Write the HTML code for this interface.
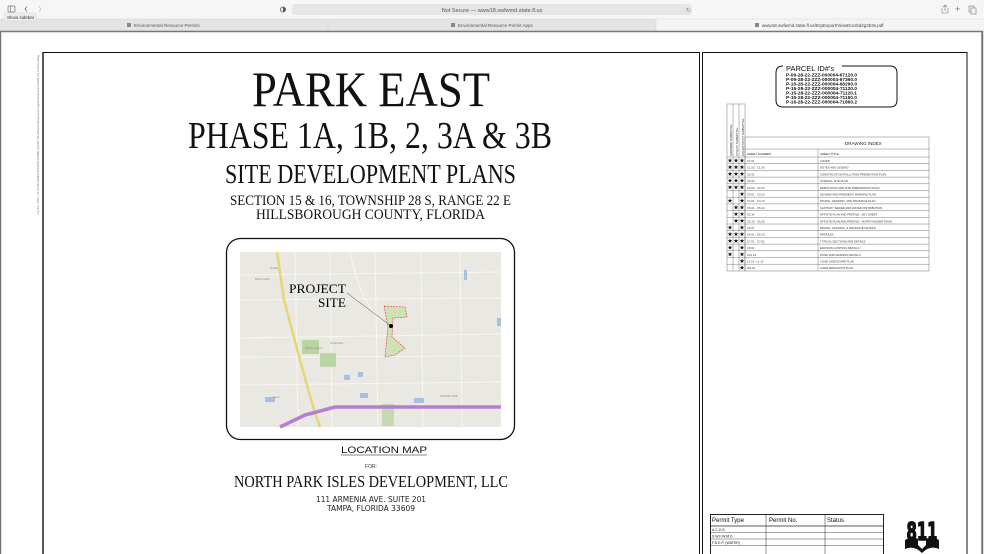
<!DOCTYPE html>
<html><head><meta charset="utf-8"><style>
html,body{margin:0;padding:0;width:984px;height:554px;overflow:hidden;background:#fff}
svg{display:block}
</style></head><body>
<svg width="984" height="554" viewBox="0 0 984 554" xmlns="http://www.w3.org/2000/svg" xmlns:xlink="http://www.w3.org/1999/xlink" font-family="Liberation Sans, sans-serif">
<defs><path id="s" d="M0,-2.4 L0.56,-0.77 L2.28,-0.74 L0.9,0.29 L1.41,1.94 L0,0.95 L-1.41,1.94 L-0.9,0.29 L-2.28,-0.74 L-0.56,-0.77Z" fill="#111"/></defs>
<!-- browser chrome -->
<rect x="0" y="0" width="984" height="19" fill="#f6f6f6"/>
<rect x="0" y="19" width="984" height="12" fill="#e4e4e4"/>
<rect x="656" y="19" width="328" height="12" fill="#f4f4f4"/>
<line x1="0" y1="19" x2="984" y2="19" stroke="#d8d8d8" stroke-width="0.5"/>
<line x1="328" y1="20" x2="328" y2="30" stroke="#ccc" stroke-width="0.5"/>
<line x1="656" y1="20" x2="656" y2="30" stroke="#ccc" stroke-width="0.5"/>
<rect x="292" y="4" width="400" height="11" rx="3" fill="#e6e6e6"/>
<text x="492" y="12" font-size="5.5" fill="#555" text-anchor="middle">Not Secure — www18.swfwmd.state.fl.us</text>
<text x="686" y="12" font-size="6" fill="#888">↻</text>
<rect x="8" y="6" width="7" height="6" rx="1" fill="none" stroke="#777" stroke-width="0.7"/>
<line x1="10.5" y1="6" x2="10.5" y2="12" stroke="#777" stroke-width="0.7"/>
<path d="M27 6.5 L25 9 L27 11.5" fill="none" stroke="#666" stroke-width="0.7"/>
<path d="M39 6.5 L41 9 L39 11.5" fill="none" stroke="#bbb" stroke-width="0.7"/>
<rect x="4" y="13" width="32" height="8" rx="1" fill="#eee" stroke="#ccc" stroke-width="0.4"/>
<text x="7" y="19" font-size="4.5" fill="#333">Show sidebar</text>
<circle cx="283" cy="9.5" r="2.5" fill="none" stroke="#555" stroke-width="0.8"/>
<path d="M283 7 A2.5 2.5 0 0 1 283 12 Z" fill="#555"/>
<path d="M943 7 L945 5 L947 7 M945 5 L945 11 M942 8 L942 13 L948 13 L948 8" fill="none" stroke="#777" stroke-width="0.6"/>
<text x="955" y="12" font-size="9" fill="#777">+</text>
<rect x="969" y="6" width="5" height="6" fill="none" stroke="#777" stroke-width="0.6"/>
<rect x="971" y="8" width="5" height="6" fill="#f6f6f6" stroke="#777" stroke-width="0.6"/>
<rect x="127" y="23" width="4" height="4" fill="#888"/>
<text x="134" y="27" font-size="4.5" fill="#555">Environmental Resource Permits</text>
<rect x="451" y="23" width="4" height="4" fill="#888"/>
<text x="458" y="27" font-size="4.5" fill="#555">Environmental Resource Permit Apps</text>
<rect x="755" y="23" width="4" height="4" fill="#888"/>
<text x="762" y="27" font-size="4.5" fill="#444">www18.swfwmd.state.fl.us/ErpExport/ViewDoc/5d2g3b3s.pdf</text>
<!-- page frame -->
<rect x="0.5" y="31.5" width="982" height="530" fill="#fff" stroke="#777" stroke-width="1.5"/>
<!-- drawing borders -->
<line x1="43" y1="52" x2="43" y2="554" stroke="#555" stroke-width="2"/>
<line x1="43" y1="52.5" x2="699" y2="52.5" stroke="#111" stroke-width="1"/>
<line x1="699.5" y1="52" x2="699.5" y2="554" stroke="#111" stroke-width="1"/>
<rect x="702.5" y="52.5" width="264.5" height="510" fill="none" stroke="#111" stroke-width="1"/>
<text transform="translate(39,215) rotate(-90)" font-size="2.6" fill="#777" textLength="160" lengthAdjust="spacingAndGlyphs">Jul 19, 2017 G:\CAD\2016\160260 PARK EAST PH\Plans\Engineering\Construction\C0.01 Cover.dwg</text>
<!-- titles -->
<g font-family="Liberation Serif, serif" fill="#111" text-anchor="start">
<text x="252" y="106" font-size="50" textLength="238" lengthAdjust="spacingAndGlyphs">PARK EAST</text>
<text x="188" y="148" font-size="38" textLength="364" lengthAdjust="spacingAndGlyphs">PHASE 1A, 1B, 2, 3A &amp; 3B</text>
<text x="225" y="183" font-size="27" textLength="291" lengthAdjust="spacingAndGlyphs">SITE DEVELOPMENT PLANS</text>
<text x="230" y="205" font-size="15" textLength="281" lengthAdjust="spacingAndGlyphs">SECTION 15 &amp; 16, TOWNSHIP 28 S, RANGE 22 E</text>
<text x="256" y="219" font-size="15" textLength="229" lengthAdjust="spacingAndGlyphs">HILLSBOROUGH COUNTY, FLORIDA</text>
<text x="234" y="487" font-size="17" textLength="274" lengthAdjust="spacingAndGlyphs">NORTH PARK ISLES DEVELOPMENT, LLC</text>
</g>
<text x="341" y="453" font-size="9" fill="#111" textLength="86" lengthAdjust="spacingAndGlyphs">LOCATION MAP</text>
<line x1="341" y1="455" x2="427" y2="455" stroke="#111" stroke-width="0.6"/>
<text x="371" y="468" font-size="5" fill="#333" text-anchor="middle">FOR:</text>
<text x="316" y="502" font-size="8" fill="#222" textLength="110" lengthAdjust="spacingAndGlyphs" font-family="DejaVu Sans, sans-serif">111 ARMENIA AVE. SUITE 201</text>
<text x="327" y="511" font-size="8" fill="#222" textLength="88" lengthAdjust="spacingAndGlyphs" font-family="DejaVu Sans, sans-serif">TAMPA, FLORIDA 33609</text>
<!-- map box -->
<rect x="226.5" y="238.5" width="288" height="201" rx="14" fill="#fff" stroke="#111" stroke-width="1.3"/>
<rect x="240" y="252" width="261" height="175" fill="#e9e8e2"/>
<g stroke="#f7f6f2" stroke-width="1" fill="none">
<path d="M240 275 L501 272"/><path d="M240 300 L501 298"/><path d="M240 338 L501 334"/>
<path d="M240 385 L501 382"/><path d="M375 252 L378 427"/><path d="M421 252 L423 427"/>
<path d="M460 252 L462 427"/><path d="M330 252 L332 427"/><path d="M295 252 L298 427"/>
<path d="M240 357 L501 356"/><path d="M350 252 Q360 300 380 320"/>
</g>
<path d="M277 252 L284 300 L300 360 L314 410 L320 427" stroke="#e8d676" stroke-width="2.5" fill="none"/>
<rect x="320" y="353" width="16" height="14" fill="#b9d3a2" rx="2"/>
<rect x="302" y="340" width="17" height="14" fill="#b9d3a2"/>
<rect x="382" y="404" width="12" height="22" fill="#c4d9ae"/>
<g fill="#a8c0e0"><rect x="344" y="375" width="6" height="5"/><rect x="358" y="372" width="5" height="5"/><rect x="360" y="393" width="8" height="5"/><rect x="464" y="270" width="3" height="10"/><rect x="497" y="318" width="4" height="8"/><rect x="265" y="397" width="10" height="5"/><rect x="414" y="398" width="10" height="5"/></g>
<path d="M280 427 L305 415 L335 407 L501 407" stroke="#b27fd4" stroke-width="3.5" fill="none"/>
<path d="M384 306 L405 307 L407 317 L393 318 L392 337 L405 348 L395 355 L385 357 L388 327 Z" fill="#cfe2b6" stroke="#e05050" stroke-width="0.7" stroke-dasharray="2 1"/>
<line x1="347" y1="293" x2="391" y2="326" stroke="#444" stroke-width="0.5"/>
<circle cx="391" cy="326" r="2" fill="#000"/>
<text x="289" y="293" font-family="Liberation Serif, serif" font-size="13" fill="#000" textLength="57" lengthAdjust="spacingAndGlyphs">PROJECT</text>
<text x="318" y="307" font-family="Liberation Serif, serif" font-size="13" fill="#000" textLength="28" lengthAdjust="spacingAndGlyphs">SITE</text>
<g font-size="2.5" fill="#888"><text x="270" y="269">Knights</text><text x="255" y="280">MUCK LAKE</text><text x="318" y="286">TRADER ROAD</text><text x="305" y="349">Ruskin Conserv</text><text x="330" y="344">Orchid Park</text><text x="273" y="398">Dover</text><text x="440" y="397">FOSTER LANE</text></g>
<!-- parcel box -->
<path d="M783 66 Q776 66 776 73 L776 100 Q776 107 783 107 L890 107 Q897 107 897 100 L897 73 Q897 66 890 66 L842 66" fill="none" stroke="#111" stroke-width="1"/>
<text x="786" y="71" font-size="7.5" fill="#111">PARCEL ID#'s</text>
<g font-size="4.8" font-weight="bold" fill="#111">
<text x="786" y="76.5" textLength="71" lengthAdjust="spacingAndGlyphs">P-09-28-22-ZZZ-000004-67120.0</text>
<text x="786" y="81" textLength="71" lengthAdjust="spacingAndGlyphs">P-09-28-22-ZZZ-000004-67360.0</text>
<text x="786" y="85.5" textLength="71" lengthAdjust="spacingAndGlyphs">P-10-28-22-ZZZ-000004-68290.0</text>
<text x="786" y="90" textLength="71" lengthAdjust="spacingAndGlyphs">P-15-28-22-ZZZ-000004-71120.0</text>
<text x="786" y="94.5" textLength="71" lengthAdjust="spacingAndGlyphs">P-15-28-22-ZZZ-000004-71120.1</text>
<text x="786" y="99" textLength="71" lengthAdjust="spacingAndGlyphs">P-15-28-22-ZZZ-000004-71150.0</text>
<text x="786" y="103.5" textLength="71" lengthAdjust="spacingAndGlyphs">P-16-28-22-ZZZ-000004-71860.2</text>
</g>
<!-- drawing index -->
<g stroke="#555" stroke-width="0.4" fill="none">
<rect x="727" y="104" width="18" height="167"/>
<line x1="733" y1="104" x2="733" y2="271"/><line x1="739" y1="104" x2="739" y2="271"/>
<rect x="745" y="137" width="184" height="134"/>
<line x1="745" y1="149" x2="929" y2="149"/>
<line x1="818" y1="149" x2="818" y2="271"/>
<line x1="727" y1="157" x2="929" y2="157"/>
<line x1="727" y1="163.7" x2="929" y2="163.7"/><line x1="727" y1="170.4" x2="929" y2="170.4"/><line x1="727" y1="177.1" x2="929" y2="177.1"/><line x1="727" y1="183.8" x2="929" y2="183.8"/><line x1="727" y1="190.5" x2="929" y2="190.5"/><line x1="727" y1="197.2" x2="929" y2="197.2"/><line x1="727" y1="203.9" x2="929" y2="203.9"/><line x1="727" y1="210.6" x2="929" y2="210.6"/><line x1="727" y1="217.3" x2="929" y2="217.3"/><line x1="727" y1="224" x2="929" y2="224"/><line x1="727" y1="230.7" x2="929" y2="230.7"/><line x1="727" y1="237.4" x2="929" y2="237.4"/><line x1="727" y1="244.1" x2="929" y2="244.1"/><line x1="727" y1="250.8" x2="929" y2="250.8"/><line x1="727" y1="257.5" x2="929" y2="257.5"/><line x1="727" y1="264.2" x2="929" y2="264.2"/>
</g>
<g font-size="3" fill="#222">
<text transform="translate(732,156) rotate(-90)">SWFWMD SUBMITTAL</text>
<text transform="translate(738,156) rotate(-90)">UTILITY SUBMITTAL</text>
<text transform="translate(744,156) rotate(-90)">COUNTY/CITY SUBMITTAL</text>
<text x="845" y="145" font-size="4.5">DRAWING INDEX</text>
<text x="747" y="155">SHEET NUMBER</text><text x="820" y="155">SHEET TITLE</text>
</g>
<g font-size="2.8" fill="#333">
<text x="747" y="162">C1.01</text><text x="820" y="162">COVER</text>
<text x="747" y="168.7">C1.02 - C1.03</text><text x="820" y="168.7">NOTES AND LEGEND</text>
<text x="747" y="175.4">C2.01</text><text x="820" y="175.4">CONSTRUCTION POLLUTION PREVENTION PLAN</text>
<text x="747" y="182.1">C2.02</text><text x="820" y="182.1">OVERALL SITE PLAN</text>
<text x="747" y="188.8">C2.03 - C2.20</text><text x="820" y="188.8">DEMOLITION AND SITE PREPARATION PLAN</text>
<text x="747" y="195.5">C3.01 - C3.13</text><text x="820" y="195.5">SIGNING AND PAVEMENT MARKING PLAN</text>
<text x="747" y="202.2">C4.01 - C4.13</text><text x="820" y="202.2">PAVING, GRADING, AND DRAINAGE PLAN</text>
<text x="747" y="208.9">C5.01 - C5.13</text><text x="820" y="208.9">SANITARY SEWER AND WATER DISTRIBUTION</text>
<text x="747" y="215.6">C5.14</text><text x="820" y="215.6">OFFSITE PLAN AND PROFILE - KEY SHEET</text>
<text x="747" y="222.3">C5.15 - C5.26</text><text x="820" y="222.3">OFFSITE PLAN AND PROFILE - NORTH WILDER ROAD</text>
<text x="747" y="229">C5.27</text><text x="820" y="229">PAVING, GRADING, &amp; DRAINAGE DETAILS</text>
<text x="747" y="235.7">C6.01 - C6.10</text><text x="820" y="235.7">PROFILES</text>
<text x="747" y="242.4">C7.01 - C7.02</text><text x="820" y="242.4">TYPICAL SECTIONS AND DETAILS</text>
<text x="747" y="249.1">C8.01</text><text x="820" y="249.1">EROSION CONTROL DETAILS</text>
<text x="747" y="255.8">C10.01</text><text x="820" y="255.8">POND AND GRADING DETAILS</text>
<text x="747" y="262.5">L1.01 - L1.13</text><text x="820" y="262.5">CODE LANDSCAPE PLAN</text>
<text x="747" y="269.2">IR1.01</text><text x="820" y="269.2">CODE IRRIGATION PLAN</text>
</g>
<g>
<use href="#s" x="730" y="160.5"/><use href="#s" x="736" y="160.5"/><use href="#s" x="742" y="160.5"/>
<use href="#s" x="730" y="167.2"/><use href="#s" x="736" y="167.2"/><use href="#s" x="742" y="167.2"/>
<use href="#s" x="730" y="173.9"/><use href="#s" x="736" y="173.9"/><use href="#s" x="742" y="173.9"/>
<use href="#s" x="730" y="180.6"/><use href="#s" x="736" y="180.6"/><use href="#s" x="742" y="180.6"/>
<use href="#s" x="730" y="187.3"/><use href="#s" x="736" y="187.3"/><use href="#s" x="742" y="187.3"/>
<use href="#s" x="742" y="194"/>
<use href="#s" x="730" y="200.7"/><use href="#s" x="742" y="200.7"/>
<use href="#s" x="736" y="207.4"/><use href="#s" x="742" y="207.4"/>
<use href="#s" x="736" y="214.1"/><use href="#s" x="742" y="214.1"/>
<use href="#s" x="736" y="220.8"/><use href="#s" x="742" y="220.8"/>
<use href="#s" x="730" y="227.5"/><use href="#s" x="742" y="227.5"/>
<use href="#s" x="730" y="234.2"/><use href="#s" x="736" y="234.2"/><use href="#s" x="742" y="234.2"/>
<use href="#s" x="730" y="240.9"/><use href="#s" x="736" y="240.9"/><use href="#s" x="742" y="240.9"/>
<use href="#s" x="730" y="247.6"/><use href="#s" x="742" y="247.6"/>
<use href="#s" x="730" y="254.3"/><use href="#s" x="742" y="254.3"/>
<use href="#s" x="742" y="261"/>
<use href="#s" x="742" y="267.7"/>
</g>
<!-- permit table -->
<g stroke="#222" fill="none">
<rect x="710.5" y="514.5" width="173" height="45" stroke-width="1"/>
<line x1="710" y1="526" x2="884" y2="526" stroke-width="0.8"/>
<line x1="766" y1="514" x2="766" y2="554" stroke-width="0.5"/>
<line x1="825" y1="514" x2="825" y2="554" stroke-width="0.5"/>
<line x1="710" y1="532.5" x2="884" y2="532.5" stroke-width="0.4"/>
<line x1="710" y1="539" x2="884" y2="539" stroke-width="0.4"/>
<line x1="710" y1="545.5" x2="884" y2="545.5" stroke-width="0.4"/>
</g>
<g fill="#111">
<text x="712" y="522" font-size="6">Permit Type</text>
<text x="769" y="522" font-size="6">Permit No.</text>
<text x="827" y="522" font-size="6">Status</text>
<text x="712" y="531" font-size="3.5">A.C.O.E.</text>
<text x="712" y="537.5" font-size="3.5">S.W.F.W.M.D.</text>
<text x="712" y="544" font-size="3.5">F.D.E.P. (WATER)</text>
</g>
<!-- 811 logo -->
<path d="M905 540 Q914 535 922 541 Q930 535 939 540 L939 549 Q930 545 922 553 Q914 545 905 549 Z" fill="#111"/>
<path d="M918 539 L926 539 L926 545 L922 549 L918 545 Z" fill="#fff"/>
<text x="922" y="540" font-size="25" font-weight="bold" fill="#111" text-anchor="middle" font-family="DejaVu Sans, sans-serif" textLength="31" lengthAdjust="spacingAndGlyphs" stroke="#111" stroke-width="1.5" stroke-linejoin="round">811</text>
<line x1="982" y1="31" x2="982" y2="554" stroke="#777" stroke-width="1.5"/>
</svg>
</body></html>
